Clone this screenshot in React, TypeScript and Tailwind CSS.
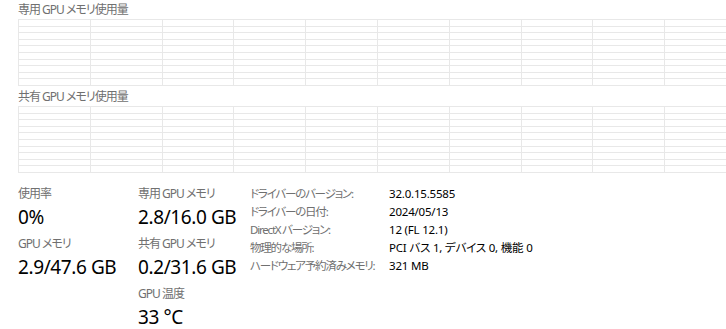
const FONT = "font-['Noto_Sans','Noto_Sans_CJK_JP',sans-serif] [font-feature-settings:'palt']";

function Graph() {
  return (
    <div className="w-[719px] h-[67px] ml-[18px] grid grid-cols-10 grid-rows-10 border-t border-l border-[#e8e8e8]">
      {Array.from({ length: 100 }).map((_, i) => (
        <div key={i} className="border-r border-b border-[#e8e8e8]" />
      ))}
    </div>
  );
}

function Stat({ label, value }: { label: string; value: string }) {
  return (
    <div className="mb-[4px] whitespace-nowrap">
      <div className="text-[12px] leading-[20px] tracking-[-1px] text-[#707070]">{label}</div>
      <div className="text-[19px] leading-[26px] tracking-[-0.4px] text-black">{value}</div>
    </div>
  );
}

const details = [
  ['ドライバーのバージョン:', '32.0.15.5585'],
  ['ドライバーの日付:', '2024/05/13'],
  ['DirectX バージョン:', '12 (FL 12.1)'],
  ['物理的な場所:', 'PCI バス 1, デバイス 0, 機能 0'],
  ['ハードウェア予約済みメモリ:', '321 MB'],
];

export default function App() {
  return (
    <div className={`w-[726px] h-[329px] overflow-hidden bg-white ${FONT}`}>
      <div className="h-[19px] pl-[18px] text-[12px] leading-[19px] tracking-[-1px] text-[#707070]">専用 GPU メモリ使用量</div>
      <Graph />
      <div className="h-[20px] pl-[18px] text-[12px] leading-[21px] tracking-[-1px] text-[#707070]">共有 GPU メモリ使用量</div>
      <Graph />

      <div className="flex pt-[11px] pl-[18px]">
        <div className="w-[120px]">
          <Stat label="使用率" value="0%" />
          <Stat label="GPU メモリ" value="2.9/47.6 GB" />
        </div>
        <div className="w-[112px]">
          <Stat label="専用 GPU メモリ" value="2.8/16.0 GB" />
          <Stat label="共有 GPU メモリ" value="0.2/31.6 GB" />
          <Stat label="GPU 温度" value="33 °C" />
        </div>
        <div className="flex flex-col pt-[1px]">
          {details.map(([k, v]) => (
            <div key={k} className="flex whitespace-nowrap text-[11.5px] leading-[18px]">
              <div className="w-[139px] tracking-[-1.2px] text-[#707070]">{k}</div>
              <div className="tracking-[-0.2px] text-black">{v}</div>
            </div>
          ))}
        </div>
      </div>
    </div>
  );
}
